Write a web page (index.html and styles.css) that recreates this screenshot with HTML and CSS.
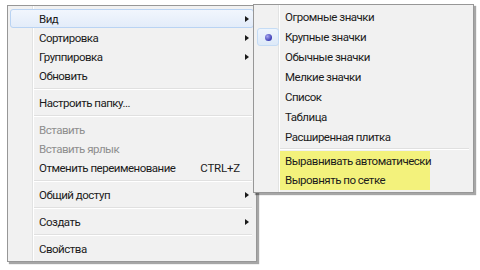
FILE: index.html
```html
<!DOCTYPE html>
<html lang="ru">
<head>
<meta charset="utf-8">
<link rel="stylesheet" href="styles.css">
</head>
<body>
<div class="stage">
  <div class="menu main">
    <div class="item hover"><span class="label">Вид</span><span class="arrow"></span></div>
    <div class="item"><span class="label">Сортировка</span><span class="arrow"></span></div>
    <div class="item"><span class="label">Группировка</span><span class="arrow"></span></div>
    <div class="item"><span class="label">Обновить</span></div>
    <div class="sep"></div>
    <div class="item"><span class="label">Настроить папку...</span></div>
    <div class="sep"></div>
    <div class="item disabled"><span class="label">Вставить</span></div>
    <div class="item disabled"><span class="label">Вставить ярлык</span></div>
    <div class="item"><span class="label">Отменить переименование</span><span class="shortcut">CTRL+Z</span></div>
    <div class="sep"></div>
    <div class="item"><span class="label">Общий доступ</span><span class="arrow"></span></div>
    <div class="sep"></div>
    <div class="item"><span class="label">Создать</span><span class="arrow"></span></div>
    <div class="sep"></div>
    <div class="item"><span class="label">Свойства</span></div>
  </div>
  <div class="menu sub">
    <div class="sitem"><span class="label">Огромные значки</span></div>
    <div class="sitem checked"><span class="radio"><span class="dot"></span></span><span class="label">Крупные значки</span></div>
    <div class="sitem"><span class="label">Обычные значки</span></div>
    <div class="sitem"><span class="label">Мелкие значки</span></div>
    <div class="sitem"><span class="label">Список</span></div>
    <div class="sitem"><span class="label">Таблица</span></div>
    <div class="sitem"><span class="label">Расширенная плитка</span></div>
    <div class="ssep"></div>
    <div class="marked">
      <div class="sitem"><span class="label">Выравнивать автоматически</span></div>
      <div class="sitem"><span class="label">Выровнять по сетке</span></div>
    </div>
  </div>
</div>
</body>
</html>
```

FILE: styles.css
```css
* { box-sizing: border-box; }
html, body { margin: 0; padding: 0; background: #ffffff; }
body {
  font-family: Roboto, "Liberation Sans", sans-serif;
  font-size: 11.5px;
  letter-spacing: -0.5px;
  color: #1b1b1b;
  width: 480px;
  height: 270px;
  overflow: hidden;
}
.stage {
  position: relative;
  padding: 5px 0 0 7px;
}
.menu {
  border: 1px solid #979797;
  background-color: #f1f1f1;
  box-shadow: 2px 2px 1px rgba(0, 0, 0, 0.35);
}
.main {
  width: 250px;
  padding: 3px 2px;
  background-image: linear-gradient(to right,
    transparent 24px, #e2e3e3 24px, #e2e3e3 25px,
    #ffffff 25px, #ffffff 26px, transparent 26px);
}
.item {
  display: flex;
  align-items: center;
  height: 19px;
  padding: 0 4px 0 28px;
  border: 1px solid transparent;
  border-radius: 3px;
}
.item .label { flex: 1; white-space: nowrap; }
.item.hover {
  background: linear-gradient(#f1f6fd, #e3ecf9);
  border-color: #b9d3f3;
}
.item.disabled { color: #8e8e8e; }
.shortcut { margin-right: 9px; letter-spacing: -0.2px; }
.arrow {
  width: 0; height: 0;
  border-top: 3.5px solid transparent;
  border-bottom: 3.5px solid transparent;
  border-left: 4px solid #1a1a1a;
}
.sep {
  height: 8px;
  margin: 0 2px 0 24px;
  background: linear-gradient(transparent 3px, #e0e0e0 3px, #e0e0e0 4px, #ffffff 4px, #ffffff 5px, transparent 5px);
}
.sub {
  position: absolute;
  left: 253px;
  top: 4px;
  width: 221px;
  padding: 2px 2px;
  background-image: linear-gradient(to right,
    transparent 24px, #e2e3e3 24px, #e2e3e3 25px,
    #ffffff 25px, #ffffff 26px, transparent 26px);
}
.sitem {
  display: flex;
  align-items: center;
  height: 20px;
  padding-left: 29px;
  position: relative;
  white-space: nowrap;
}
.radio {
  position: absolute;
  left: 1px;
  top: 1px;
  width: 22px;
  height: 18px;
  border: 1px solid #c5dcf5;
  border-radius: 3px;
  background: linear-gradient(#eef5fd, #dde9f8);
  display: flex;
  align-items: center;
  justify-content: center;
}
.dot {
  width: 7px;
  height: 7px;
  border-radius: 50%;
  background: radial-gradient(circle at 35% 35%, #a7a7f0, #3d3db5 70%);
}
.ssep {
  height: 4px;
  margin: 0 2px 0 24px;
  background: linear-gradient(transparent 1px, #e0e0e0 1px, #e0e0e0 2px, #ffffff 2px, #ffffff 3px, transparent 3px);
}
.marked {
  width: 150px;
  margin-left: 24px;
  padding-bottom: 1px;
  background: #f3f27c;
}
.marked .sitem { padding-left: 5px; height: 19px; }
```
